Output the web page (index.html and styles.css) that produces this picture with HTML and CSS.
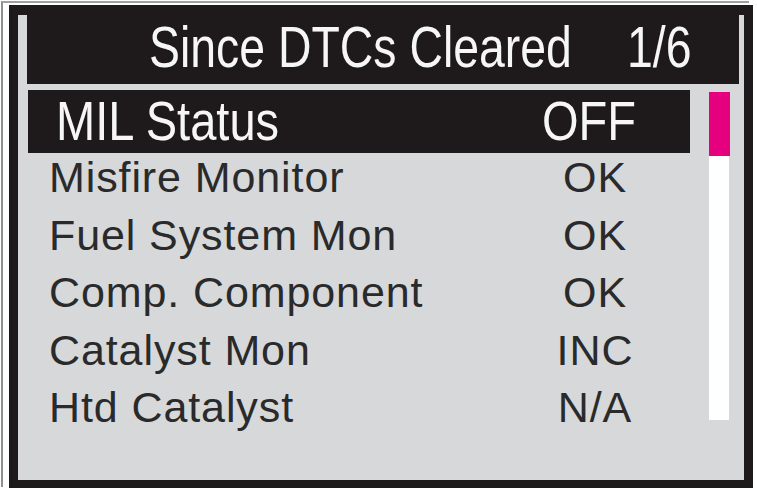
FILE: index.html
```html
<!DOCTYPE html>
<html lang="en">
<head>
<meta charset="utf-8">
<title>Since DTCs Cleared</title>
<link rel="stylesheet" href="styles.css">
</head>
<body>
<div class="outer">
  <div class="lcd">
    <div class="title">
      <span class="title-text"><span class="narrow">Since DTCs Cleared</span></span>
      <span class="page-count"><span class="narrow">1/6</span></span>
    </div>
    <div class="body">
      <div class="list">
        <div class="row sel"><span class="label"><span class="narrow">MIL Status</span></span><span class="value"><span class="narrow">OFF</span></span></div>
        <div class="row"><span class="label">Misfire Monitor</span><span class="value">OK</span></div>
        <div class="row"><span class="label">Fuel System Mon</span><span class="value">OK</span></div>
        <div class="row"><span class="label">Comp. Component</span><span class="value">OK</span></div>
        <div class="row"><span class="label">Catalyst Mon</span><span class="value">INC</span></div>
        <div class="row"><span class="label">Htd Catalyst</span><span class="value">N/A</span></div>
      </div>
      <div class="scroll">
        <div class="thumb"></div>
        <div class="track"></div>
      </div>
    </div>
  </div>
</div>
</body>
</html>
```
FILE: styles.css
```css
html, body {
  margin: 0;
  padding: 0;
  background: #ffffff;
  width: 757px;
  height: 490px;
  overflow: hidden;
}

.outer {
  margin: 1px 0 0 1px;
  padding: 2px 0 0 6px;
  border-left: 2px solid #8f8f8f;
  border-top: 2px solid #a0a0a0;
  width: 748px;
  height: 486px;
  box-sizing: border-box;
}

.lcd {
  width: 744px;
  height: 483px;
  box-sizing: border-box;
  border-style: solid;
  border-color: #1e1a1b;
  border-width: 10px 9px 8px 9px;
  background: #d6d8da;
  display: flex;
  flex-direction: column;
}

.narrow {
  display: inline-block;
  transform-origin: 0 50%;
  white-space: nowrap;
}

.title {
  margin: 0 5px 0 9px;
  height: 69px;
  background: #1e1a1b;
  color: #f6f6f6;
  display: flex;
  align-items: flex-start;
  padding: 0 46px 0 122px;
  font-family: "Liberation Sans", Arial, sans-serif;
  font-size: 58px;
  line-height: 63px;
  white-space: nowrap;
}

.title .narrow {
  transform: scaleX(0.8);
}

.title-text {
  width: 425px;
  flex: none;
}

.page-count {
  width: 66px;
  flex: none;
  margin-left: auto;
}

.body {
  margin-top: 6px;
  display: flex;
  flex: 1;
}

.list {
  width: 691px;
  display: flex;
  flex-direction: column;
}

.row {
  display: grid;
  grid-template-columns: 1fr 150px;
  padding: 0 39px 0 31px;
  height: 57.5px;
  line-height: 48px;
  font-family: "Liberation Sans", Arial, sans-serif;
  font-size: 43px;
  letter-spacing: 0.9px;
  color: #2a2a2a;
  white-space: nowrap;
}

.row .value {
  text-align: center;
}

.row.sel {
  margin-left: 10px;
  width: 662px;
  height: 63px;
  box-sizing: border-box;
  padding: 0 0 0 28px;
  grid-template-columns: 486px 1fr;
  background: #1e1a1b;
  color: #f6f6f6;
  font-size: 56px;
  line-height: 62px;
  letter-spacing: 0;
}

.row.sel .narrow {
  transform: scaleX(0.84);
}

.row.sel .value {
  text-align: left;
}

.scroll {
  margin-top: 2px;
  width: 21px;
  display: flex;
  flex-direction: column;
}

.thumb {
  height: 64px;
  background: #e5007d;
}

.track {
  height: 264px;
  width: 20px;
  background: #ffffff;
}
```
